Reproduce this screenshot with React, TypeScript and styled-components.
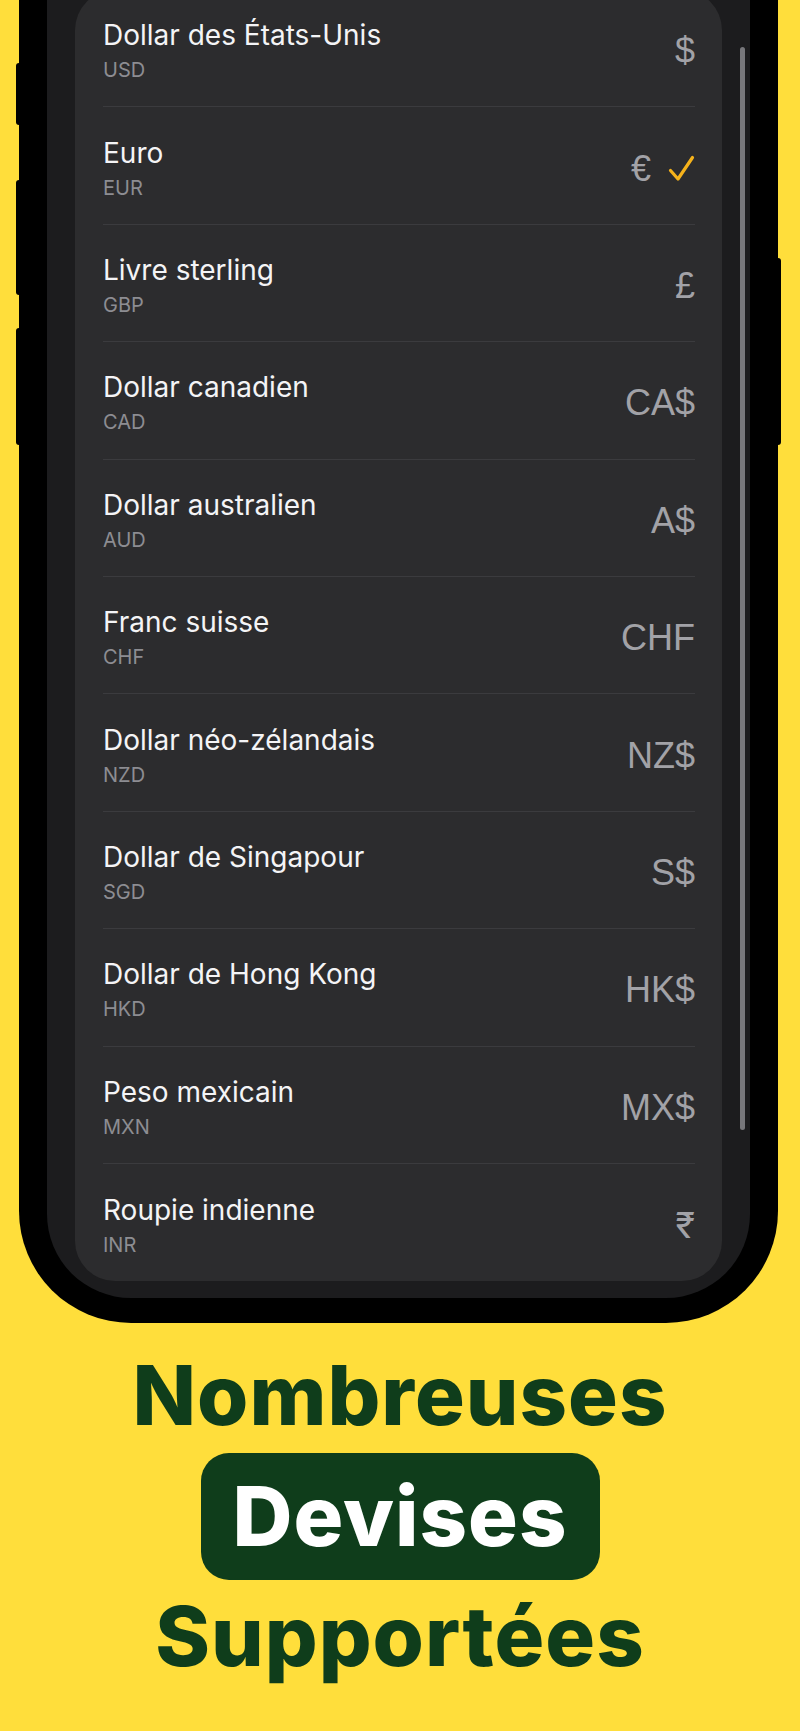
import styled, { createGlobalStyle } from "styled-components";

const GlobalStyle = createGlobalStyle`
    html, body {
        margin: 0;
        padding: 0;
        background: #ffde3b;
    }
    body {
        font-family: "Inter", "Liberation Sans", sans-serif;
    }
`;

const currencies = [
    { name: "Dollar des États-Unis", code: "USD", symbol: "$" },
    { name: "Euro", code: "EUR", symbol: "€", selected: true },
    { name: "Livre sterling", code: "GBP", symbol: "£" },
    { name: "Dollar canadien", code: "CAD", symbol: "CA$" },
    { name: "Dollar australien", code: "AUD", symbol: "A$" },
    { name: "Franc suisse", code: "CHF", symbol: "CHF" },
    { name: "Dollar néo-zélandais", code: "NZD", symbol: "NZ$" },
    { name: "Dollar de Singapour", code: "SGD", symbol: "S$" },
    { name: "Dollar de Hong Kong", code: "HKD", symbol: "HK$" },
    { name: "Peso mexicain", code: "MXN", symbol: "MX$" },
    { name: "Roupie indienne", code: "INR", symbol: "₹" },
];

const Check = () => (
    <svg width="27" height="27" viewBox="0 0 27 27" fill="none">
        <path d="M2.5 15.5 L10 24 L24.5 2.5" stroke="#f5b21b" strokeWidth="3.2" strokeLinecap="round" strokeLinejoin="round" />
    </svg>
);

const App = () => {
    return (
        <Page>
            <GlobalStyle />
            <PhoneArea>
                <Phone>
                    <SideButton side="left" top={63} height={62} />
                    <SideButton side="left" top={180} height={115} />
                    <SideButton side="left" top={328} height={117} />
                    <SideButton side="right" top={258} height={187} />
                    <Screen>
                        <Card>
                            {currencies.map((c, i) => (
                                <Row key={c.code} last={i === currencies.length - 1}>
                                    <Names>
                                        <Title>{c.name}</Title>
                                        <Code>{c.code}</Code>
                                    </Names>
                                    <Trailing>
                                        <Symbol>{c.symbol}</Symbol>
                                        {c.selected && <Check />}
                                    </Trailing>
                                </Row>
                            ))}
                        </Card>
                        <ScrollIndicator />
                    </Screen>
                </Phone>
            </PhoneArea>
            <Headline>
                <Line>Nombreuses</Line>
                <Pill>Devises</Pill>
                <Line>Supportées</Line>
            </Headline>
        </Page>
    );
};

const Page = styled.div`
    width: 800px;
    height: 1731px;
    overflow: hidden;
    background: #ffde3b;
    display: flex;
    flex-direction: column;
`;

const PhoneArea = styled.div`
    padding: 0 22px 0 19px;
`;

const Phone = styled.div`
    position: relative;
    border: 28px solid #000;
    border-top: 0;
    border-bottom-width: 25px;
    border-radius: 0 0 112px 112px;
    background: #000;
`;

const SideButton = styled.div<{ side: "left" | "right"; top: number; height: number }>`
    position: absolute;
    top: ${(p) => p.top}px;
    height: ${(p) => p.height}px;
    width: 6px;
    ${(p) => (p.side === "left" ? "left: -31px;" : "right: -31px;")}
    background: #000;
    border-radius: 3px;
`;

const Screen = styled.div`
    position: relative;
    display: flow-root;
    background: #1c1c1e;
    border-radius: 0 0 84px 84px;
    padding: 0 28px 17px;
`;

/* the list is scrolled, so its top edge sits just above the page */
const Card = styled.div`
    margin-top: -10px;
    background: #2c2c2e;
    border-radius: 40px;
    overflow: hidden;
`;

const Row = styled.div<{ last?: boolean }>`
    height: 117.4px;
    box-sizing: border-box;
    margin: 0 27px 0 28px;
    display: flex;
    align-items: center;
    justify-content: space-between;
    border-bottom: ${(p) => (p.last ? "none" : "1.5px solid #3b3b3e")};
`;

const Names = styled.div`
    display: flex;
    flex-direction: column;
    gap: 6px;
    padding-top: 4px;
`;

const Title = styled.div`
    font-family: "Inter", "Liberation Sans", sans-serif;
    font-size: 28px;
    line-height: 34px;
    color: #f4f4f6;
`;

const Code = styled.div`
    font-family: "Inter", "Liberation Sans", sans-serif;
    font-size: 20px;
    line-height: 24px;
    color: #8d8d92;
`;

const Trailing = styled.div`
    display: flex;
    align-items: center;
    gap: 17px;
    padding-top: 6px;
`;

const Symbol = styled.div`
    font-family: "Liberation Sans", "Inter", sans-serif;
    font-size: 36px;
    line-height: 40px;
    color: #a2a2a7;
`;

const ScrollIndicator = styled.div`
    position: absolute;
    right: 5px;
    top: 47px;
    width: 5px;
    height: 1083px;
    border-radius: 3px;
    background: #77777b;
`;

const Headline = styled.div`
    display: flex;
    flex-direction: column;
    align-items: center;
    padding-top: 27px;
`;

const Line = styled.div`
    font-family: "Inter", "Liberation Sans", sans-serif;
    font-weight: 800;
    font-size: 83px;
    line-height: 90px;
    letter-spacing: 1px;
    color: #0f3d1b;
`;

const Pill = styled.div`
    font-family: "Inter", "Liberation Sans", sans-serif;
    font-weight: 800;
    font-size: 83px;
    line-height: 127px;
    letter-spacing: 1px;
    color: #fff;
    background: #0f3d1b;
    border-radius: 28px;
    padding: 0 32px;
    margin: 13px 0 11px;
`;

export default App;
